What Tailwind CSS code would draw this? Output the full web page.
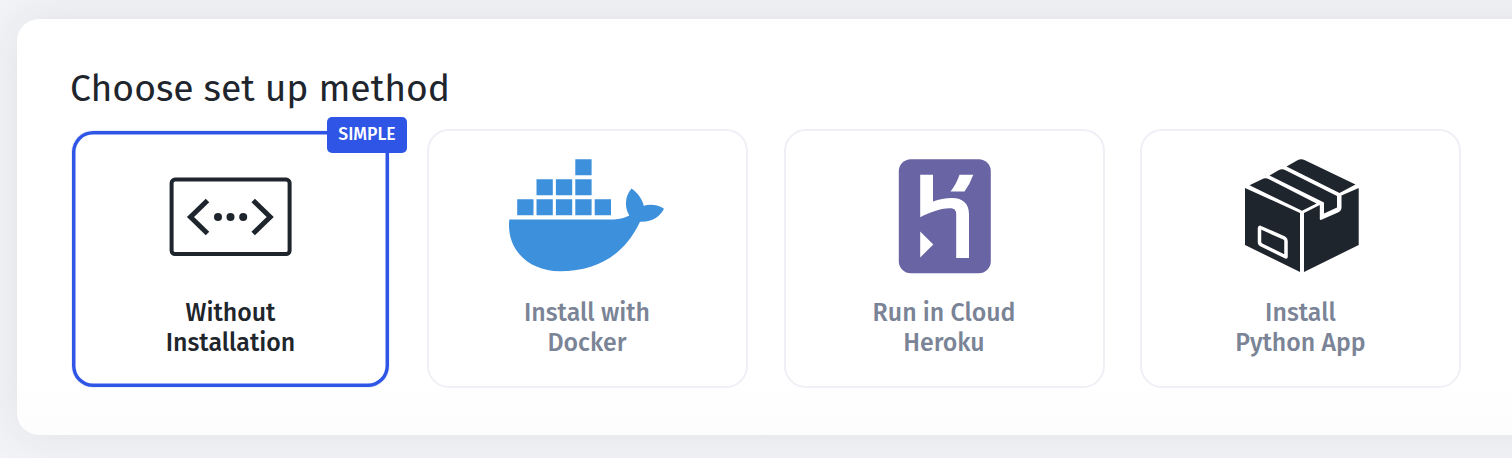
<!DOCTYPE html>
<html lang="en">
<head>
<meta charset="utf-8">
<title>Choose set up method</title>
<script src="https://cdn.jsdelivr.net/npm/@tailwindcss/browser@4"></script>
</head>
<body class="h-[458px] overflow-hidden bg-[#f2f3f6] pl-[17px] pt-[19px] font-['Fira_Sans','Noto_Sans',sans-serif] text-[#1e252c]">
<main class="h-[416px] w-[1560px] rounded-[22px] bg-linear-to-b from-white from-85% to-[#fdfdfd] pl-[53.500px] pt-[47px] shadow-[0_0_44px_rgba(40,50,75,0.085)]">
  <h1 class="-ml-[0.500px] h-[63px] whitespace-nowrap text-[37.300px] leading-[46px]">Choose set up method</h1>
  <div class="flex gap-[35.500px]">
    <button class="relative mr-[2px] mt-px flex h-[258px] w-[319px] flex-col items-center rounded-[22px] border border-[#edf0fa]">
      <span class="flex h-full w-full flex-col items-center rounded-[21px] pt-[3px] shadow-[inset_0_0_0_3.500px_#2f55e6]">
        <svg class="relative left-[0.500px] mt-[43px] h-[80px] w-[124px] shrink-0" viewBox="0 0 124 80" fill="none" stroke="#1e252c" stroke-width="4"><rect x="2.600" y="2.600" width="118" height="74.500" rx="3.500"/><path d="M38.500 23.500 21.500 40 38.500 56.500M84.200 23.500 101.200 40 84.200 56.500" stroke-width="5"/><g fill="#1e252c" stroke="none"><circle cx="49" cy="40" r="4"/><circle cx="61.500" cy="40" r="4"/><circle cx="74.200" cy="40" r="4"/></g></svg>
        <span class="relative left-[0.500px] mt-[41px] flex flex-col items-center whitespace-nowrap text-[24.900px] font-medium leading-[30px]"><span>Without</span><span>Installation</span></span>
      </span>
      <span class="absolute -top-[14px] left-[255px] flex h-[35.500px] w-[80px] items-center justify-center rounded-[5px] bg-[#2f55e6] pl-px text-[17.600px] font-medium text-white">SIMPLE</span>
    </button>
    <button class="flex h-[259px] w-[321px] flex-col items-center rounded-[22px] border-2 border-[#eef0f6] text-[#7a8496]">
      <svg class="relative left-[2.500px] mt-[19px] h-[130px] w-[180px] shrink-0" viewBox="0 0 180 130" fill="#3d90dc"><path d="M75.300 9.300h16.300v16H75.300zM36.500 29.300h16.300v16H36.500zM55.900 29.300h16.300v16H55.900zM75.300 29.300h16.300v16H75.300zM17.200 49.200h16.300v16H17.200zM36.500 49.200h16.300v16H36.500zM55.900 49.200h16.300v16H55.900zM75.300 49.200h16.300v16H75.300zM94.700 49.200H111v16H94.700z"/><path d="M9.300 69.500H114C120 69.300 125 67.600 129.300 65.500C124.500 58 124.500 46.500 131.500 38.600C138 43 142.500 49.500 143.700 55.700C151 53.700 158.500 54.800 164 58.800C160 67 151.500 72.300 140 71.700C126 102 100 121.200 60 121.200C28 121.200 6 99 9.300 69.500Z"/></svg>
      <span class="relative -left-[0.500px] mt-[18px] flex flex-col items-center whitespace-nowrap text-[24.900px] font-medium leading-[30px]"><span>Install with</span><span>Docker</span></span>
    </button>
    <button class="flex h-[259px] w-[321px] flex-col items-center rounded-[22px] border-2 border-[#eef0f6] text-[#7a8496]">
      <svg class="relative left-[0.700px] mt-[19px] h-[130px] w-[130px] shrink-0" viewBox="0 0 130 130"><rect x="18.800" y="9.300" width="92" height="114" rx="12" fill="#6965a4"/><path fill="#fff" d="M40.200 24.800H53V51.500C59 49.500 65 48 72 48C83 48 89 54 89 64V108H76.200V64C76.200 60 74 58.300 69.500 58.300C59.500 58.300 49 63 40.200 67.200ZM79.500 24.800H93.300Q90 34 84.500 41.500H70.500Q76.500 34 79.500 24.800ZM40.200 81.500 53.300 94.500 40.200 107.500Z"/></svg>
      <span class="mt-[18px] flex flex-col items-center whitespace-nowrap text-[24.900px] font-medium leading-[30px]"><span>Run in Cloud</span><span>Heroku</span></span>
    </button>
    <button class="flex h-[259px] w-[321px] flex-col items-center rounded-[22px] border-2 border-[#eef0f6] text-[#7a8496]">
      <svg class="relative -left-px mt-[19px] h-[130px] w-[140px] shrink-0" viewBox="0 0 140 130"><g fill="#1e252c"><path d="M15 38 70 63V122L15 95ZM74 63 89.800 55V69Q90 70.500 92 69.600L109 62Q111.500 60.800 111.500 58V45.500L128.700 38V95L74 122ZM19.500 35.300 32 29.200Q35.500 27.500 39 29.200L86.500 53.500 72 60.800ZM39.500 25.500 48.500 20.200Q52 18.500 55.500 20.200L107 46V57.500L94 63.500V52.500ZM56.500 16.500 67.500 10.200Q71 8.300 75 10.200L125.500 34.500 109.500 43Z"/></g><path d="M30.500 77.500 54.500 88.200Q56 89 56 91V107L31.500 95Q29.500 94 29.500 92V78.500Q29.500 77 30.500 77.500Z" fill="none" stroke="#fff" stroke-width="3.500" stroke-linejoin="round"/></svg>
      <span class="mt-[18px] flex flex-col items-center whitespace-nowrap text-[24.900px] font-medium leading-[30px]"><span>Install</span><span>Python App</span></span>
    </button>
  </div>
</main>
</body>
</html>
